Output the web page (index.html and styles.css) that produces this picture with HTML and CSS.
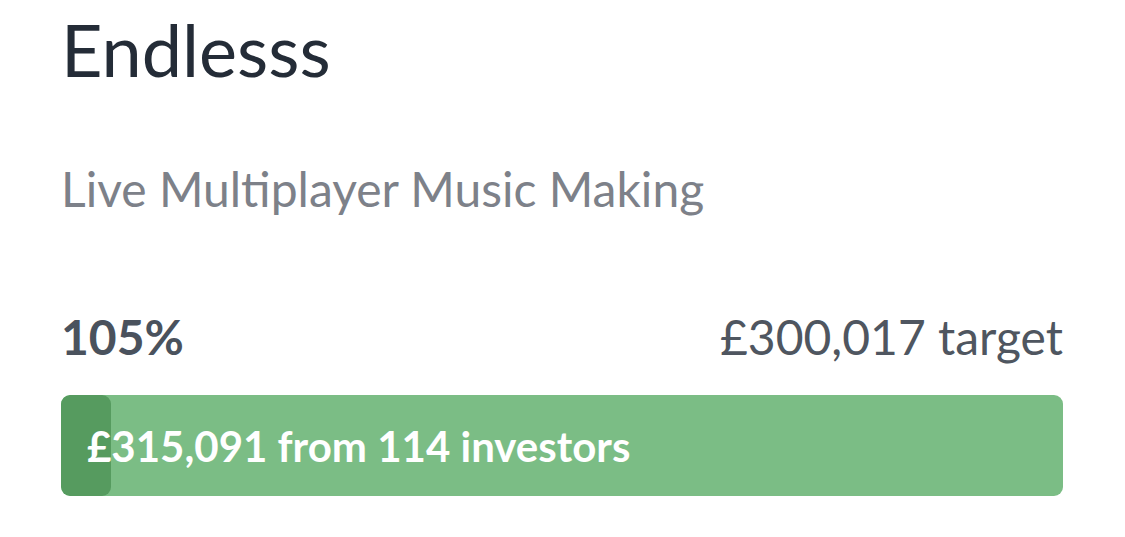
FILE: index.html
```html
<!doctype html>
<html>
<head>
<meta charset="utf-8">
<title>Endlesss</title>
<link rel="stylesheet" href="styles.css">
</head>
<body>
<div class="campaign">
	<h1 class="name">Endlesss</h1>
	<p class="tagline">Live Multiplayer Music Making</p>
	<div class="stats">
		<span class="percent">105%</span>
		<span class="target">£300,017 target</span>
	</div>
	<div class="bar">
		<div class="over"></div>
		<span class="raised">£315,091 from 114 investors</span>
	</div>
</div>
</body>
</html>
```

FILE: styles.css
```css
body {
	margin: 0;
	background: #fff;
	font-family: Lato, "Liberation Sans", sans-serif;
}
.campaign {
	padding: 6px 62px 0 61px;
}
.name {
	margin: 0;
	font-size: 72px;
	font-weight: 400;
	line-height: 1.2;
	color: #242c37;
}
.tagline {
	margin: 68px 0 0;
	font-size: 48px;
	line-height: 1.2;
	color: #7d8189;
}
.stats {
	display: flex;
	justify-content: space-between;
	align-items: baseline;
	margin-top: 90px;
	font-size: 48px;
	line-height: 1.2;
	color: #4f5660;
}
.percent {
	font-weight: 700;
	color: #4a525d;
}
.bar {
	position: relative;
	display: flex;
	align-items: center;
	height: 101px;
	margin-top: 29px;
	border-radius: 9px;
	background: #7bbd85;
	overflow: hidden;
}
.over {
	position: absolute;
	left: 0;
	top: 0;
	bottom: 0;
	width: 50px;
	border-radius: 9px;
	background: #569b5f;
}
.raised {
	position: relative;
	padding: 2px 0 0 26px;
	font-size: 42px;
	font-weight: 700;
	color: #fff;
}
```
